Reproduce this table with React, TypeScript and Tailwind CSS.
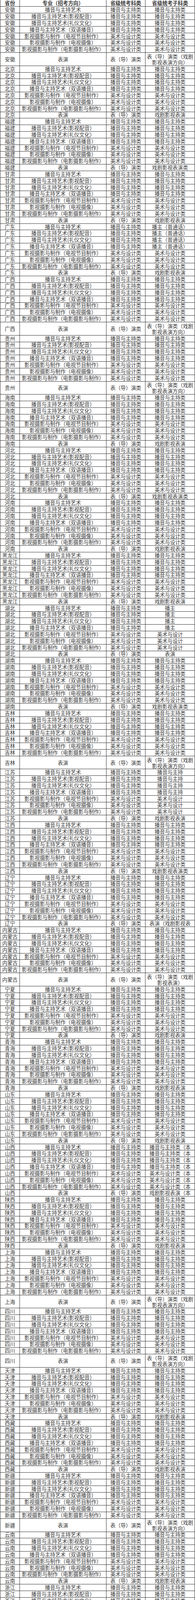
import React from 'react';

type Prov = { n: string; a?: string; b?: string; last: string; tall?: boolean };

const TALL = '表（导）演类（戏剧影视表演方向）';

const PROVS: Prov[] = [
  { n: '安徽', last: TALL, tall: true },
  { n: '北京', last: '戏剧影视表演' },
  { n: '福建', last: '戏剧影视表演类' },
  { n: '甘肃', last: '戏剧影视表演' },
  { n: '广东', a: '播主（普通话）', last: '戏剧影视表演' },
  { n: '广西', last: TALL, tall: true },
  { n: '贵州', last: TALL, tall: true },
  { n: '海南', last: '戏剧影视表演' },
  { n: '河北', last: '戏剧影视表演类' },
  { n: '河南', last: '戏剧影视表演' },
  { n: '黑龙江', last: '戏剧影视表演' },
  { n: '湖北', a: '播主', b: '美术与设计', last: '表演' },
  { n: '湖南', last: '戏剧影视表演类' },
  { n: '吉林', last: TALL, tall: true },
  { n: '江苏', a: '播音与主持', b: '美术与设计', last: '戏剧影视表演' },
  { n: '江西', last: '戏剧影视表演类' },
  { n: '辽宁', last: '表演（戏剧影视表' },
  { n: '内蒙古', last: '表（导）演类（戏剧影视表演）', tall: true },
  { n: '宁夏', last: '戏剧影视表演' },
  { n: '青海', last: '戏剧影视表演' },
  { n: '山东', last: '戏剧影视表演' },
  { n: '山西', a: '播音与主持类（本', b: '美术与设计类（本', last: '戏剧影视表演（本' },
  { n: '陕西', last: '戏剧影视表演' },
  { n: '上海', last: TALL, tall: true },
  { n: '四川', last: TALL, tall: true },
  { n: '天津', last: '戏剧影视表演' },
  { n: '西藏', last: '戏剧影视表演' },
  { n: '新疆', last: TALL, tall: true },
  { n: '云南', last: '戏剧影视表演' },
  { n: '浙江', last: '戏剧影视表演' },
  { n: '重庆', last: '戏剧影视表演' },
];

const MAJORS = [
  '播音与主持艺术',
  '播音与主持艺术(影视配音）',
  '播音与主持艺术(礼仪文化）',
  '播音与主持艺术（双语播音）',
  '影视摄影与制作（电视节目制作）',
  '影视摄影与制作（电视摄像）',
  '影视摄影与制作（电影摄影与制作）',
  '表演',
];

const cat3 = (i: number) => (i < 4 ? '播音与主持类' : i < 7 ? '美术与设计类' : '表（导）演类');

const cellCls =
  'min-h-0 flex items-center justify-center border-r border-b border-[#333] text-center';

function Row({ c1, c2, c3, c4, tall, header }: { c1: string; c2: string; c3: string; c4: string; tall?: boolean; header?: boolean }) {
  return (
    <div
      className={
        'grid grid-cols-[50px_222px_100px_127px] grid-rows-1 ' +
        (header ? 'h-[17.3px] font-bold leading-[14px]' : tall ? 'h-[33.68px] leading-[15px]' : 'h-[16.84px] leading-[14px]')
      }
    >
      <div className={cellCls + ' whitespace-nowrap'}>{c1}</div>
      <div className={cellCls + ' whitespace-nowrap'}>{c2}</div>
      <div className={cellCls + ' whitespace-nowrap'}>{c3}</div>
      <div className={cellCls + (tall ? ' whitespace-normal pt-px' : ' whitespace-nowrap')}>{c4}</div>
    </div>
  );
}

export default function App() {
  return (
    <div className="w-[500px] bg-white border-l border-[#333] font-['Noto_Sans_CJK_SC',sans-serif] text-[13.2px] text-[#3a3a3a]">
      <Row header c1="省份" c2="专业（招考方向）" c3="省级统考科类" c4="省级统考子科类" />
      {PROVS.map((p) =>
        MAJORS.map((m, i) => {
          const c4 = i < 4 ? p.a ?? '播音与主持类' : i < 7 ? p.b ?? '美术与设计类' : p.last;
          return (
            <Row
              key={p.n + i}
              c1={p.n}
              c2={m}
              c3={cat3(i)}
              c4={c4}
              tall={i === 7 && p.tall}
            />
          );
        })
      )}
    </div>
  );
}
